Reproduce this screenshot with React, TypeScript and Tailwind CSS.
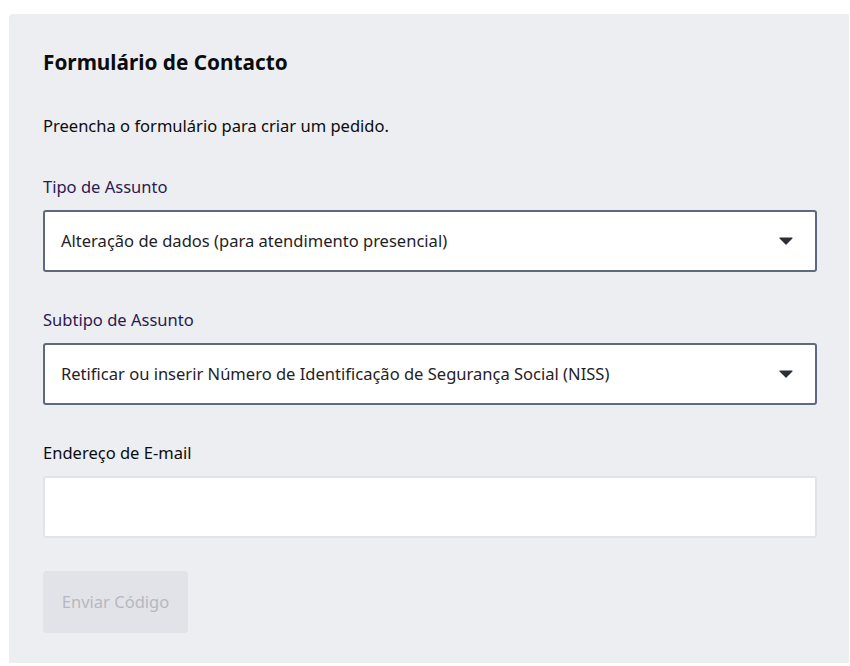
import { useState } from "react";

const CARET = (
  <svg width="14" height="8" viewBox="0 0 14 8" className="shrink-0">
    <path d="M1 0.5h12a0.6 0.6 0 0 1 0.45 1L7.45 7.4a0.6 0.6 0 0 1-0.9 0L0.55 1.5A0.6 0.6 0 0 1 1 0.5z" fill="#2a2f35" />
  </svg>
);

function SelectBox({ value }: { value: string }) {
  return (
    <div className="flex h-[62px] items-center justify-between rounded-[3px] border-2 border-[#5f6882] bg-white pl-[16px] pr-[22px]">
      <span className="text-[16.55px] text-[#1f2226]">{value}</span>
      {CARET}
    </div>
  );
}

export default function App() {
  const [email, setEmail] = useState("");

  return (
    <div className="h-[666px] w-[850px] bg-white pl-[9px] pt-[14px]" style={{ fontFamily: '"Noto Sans", "Open Sans", sans-serif' }}>
      <div className="flex h-[649px] w-[840px] flex-col rounded-tl-[4px] bg-[#edeef2] pl-[34px] pr-[32px] pt-[34px]">
        <h1 className="text-[20.75px] font-bold leading-[28px] text-[#0b0c0e]">Formulário de Contacto</h1>
        <p className="mt-[38px] text-[16.55px] leading-[24px] text-[#0b0c0e]">Preencha o formulário para criar um pedido.</p>

        <label className="mt-[37px] text-[16.55px] leading-[24px] text-[#2b1a50]">Tipo de Assunto</label>
        <div className="mt-[11px]">
          <SelectBox value="Alteração de dados (para atendimento presencial)" />
        </div>

        <label className="mt-[36px] text-[16.55px] leading-[24px] text-[#2b1a50]">Subtipo de Assunto</label>
        <div className="mt-[11px]">
          <SelectBox value="Retificar ou inserir Número de Identificação de Segurança Social (NISS)" />
        </div>

        <label className="mt-[36px] text-[16.55px] leading-[24px] text-[#0b0c0e]">Endereço de E-mail</label>
        <input
          value={email}
          onChange={(e) => setEmail(e.target.value)}
          className="mt-[11px] h-[62px] rounded-[3px] border-2 border-[#e2e3e8] bg-white px-[16px] text-[16.55px] outline-none"
        />

        <button
          disabled
          className="mt-[33px] h-[62px] w-[145px] rounded-[4px] bg-[#e2e3e8] text-[16.55px] text-[#b6b8c0]"
        >
          Enviar Código
        </button>
      </div>
    </div>
  );
}
